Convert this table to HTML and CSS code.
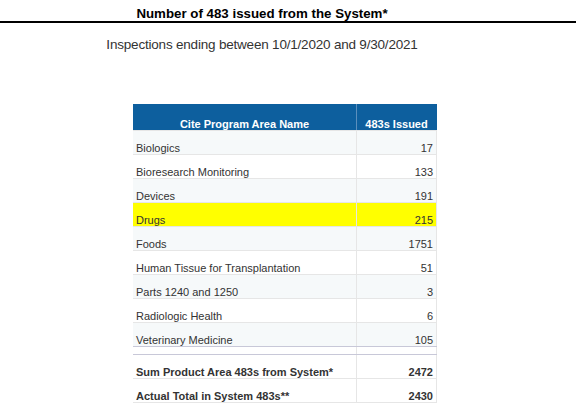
FILE: index.html
```html
<!DOCTYPE html>
<html>
<head>
<meta charset="utf-8">
<link rel="stylesheet" href="styles.css">
</head>
<body>
<h1 class="title"><span class="centered">Number of 483 issued from the System*</span></h1>
<p class="subtitle"><span class="centered">Inspections ending between 10/1/2020 and 9/30/2021</span></p>
<table class="grid">
  <thead>
    <tr class="head"><th class="name">Cite Program Area Name</th><th class="num">483s Issued</th></tr>
  </thead>
  <tbody>
    <tr class="alt"><td class="name">Biologics</td><td class="num">17</td></tr>
    <tr><td class="name">Bioresearch Monitoring</td><td class="num">133</td></tr>
    <tr class="alt"><td class="name">Devices</td><td class="num">191</td></tr>
    <tr class="hl"><td class="name">Drugs</td><td class="num">215</td></tr>
    <tr class="alt"><td class="name">Foods</td><td class="num">1751</td></tr>
    <tr><td class="name">Human Tissue for Transplantation</td><td class="num">51</td></tr>
    <tr class="alt"><td class="name">Parts 1240 and 1250</td><td class="num">3</td></tr>
    <tr><td class="name">Radiologic Health</td><td class="num">6</td></tr>
    <tr class="alt last"><td class="name">Veterinary Medicine</td><td class="num">105</td></tr>
    <tr class="spacer"><td></td><td></td></tr>
    <tr class="total"><td class="name">Sum Product Area 483s from System*</td><td class="num">2472</td></tr>
    <tr class="total"><td class="name">Actual Total in System 483s**</td><td class="num">2430</td></tr>
  </tbody>
</table>
</body>
</html>
```

FILE: styles.css
```css
html, body {
  margin: 0;
  padding: 0;
  background: #ffffff;
  font-family: "Liberation Sans", Arial, sans-serif;
}
.centered {
  display: block;
  width: 524px;
  text-align: center;
}
.title {
  margin: 0;
  border-bottom: 2px solid #000;
  font-size: 13.3px;
  font-weight: bold;
  line-height: 16px;
  padding-top: 6px;
  box-sizing: border-box;
  height: 23px;
  color: #000;
}
.subtitle {
  margin: 0;
  padding-top: 14px;
  height: 81px;
  box-sizing: border-box;
  font-size: 13.5px;
  line-height: 16px;
  color: #333;
  letter-spacing: -0.2px;
}
.grid {
  margin-left: 133px;
  border-collapse: collapse;
  width: 304px;
  font-size: 11px;
  color: #333;
}
.grid th, .grid td {
  padding: 0 3px 0 3px;
  vertical-align: bottom;
  line-height: 12px;
  border-bottom: 1px solid #e6e6e6;
  border-right: 1px solid #e6e6e6;
}
.grid td.name, .grid th.name { width: 217px; }
.grid td.num { text-align: right; }
.head th {
  background: #0d5f9e;
  color: #fff;
  font-weight: bold;
  height: 26px;
  line-height: 11px;
  text-align: center;
  border-right: 1px solid #5b8fbd;
  padding-bottom: 0;
}
.head th.num { border-right: 1px solid #0d5f9e; }
tbody tr td { height: 23px; }
tr.alt td { background: #f6f9fa; }
tr.hl td { background: #ffff00; }
tr.last td { border-bottom: 1px solid #c8c8d8; }
tr.spacer td { height: 7px; padding: 0; border-bottom: 1px solid #c8c8d8; }
tr.total td { font-weight: bold; height: 23px; padding-bottom: 0; }
```
